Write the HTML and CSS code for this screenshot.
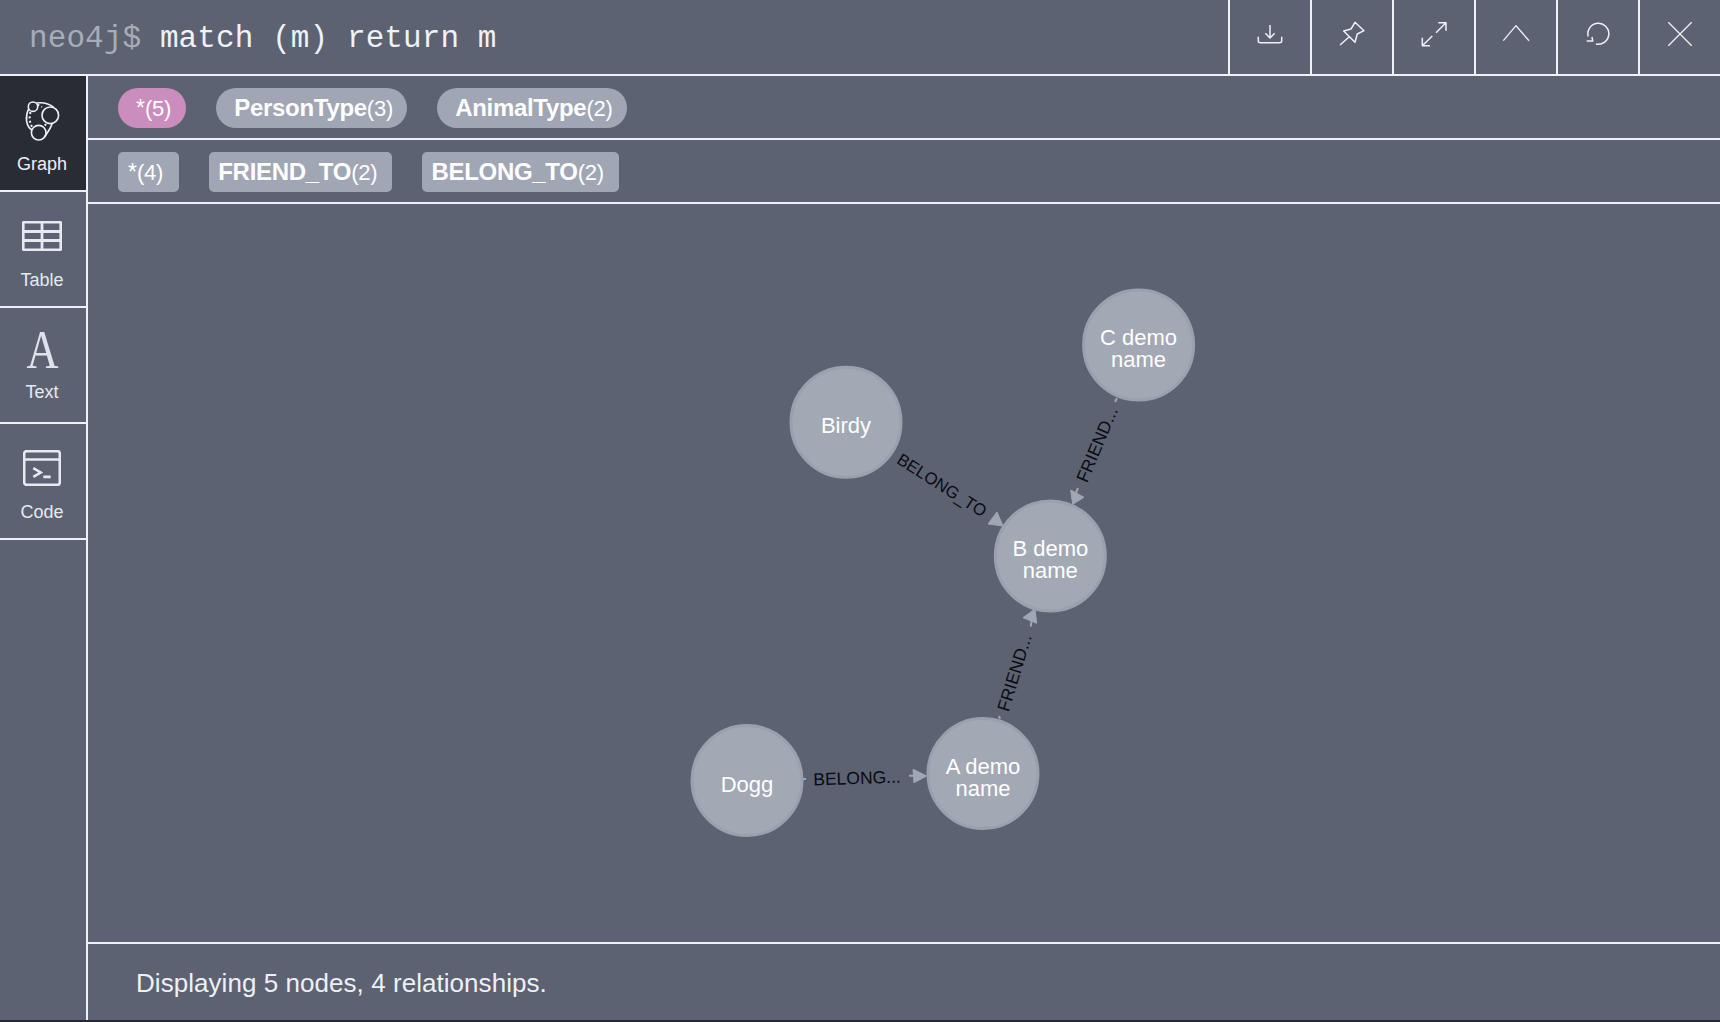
FILE: index.html
```html
<!DOCTYPE html>
<html lang="en">
<head>
<meta charset="utf-8">
<title>neo4j result frame</title>
<link rel="stylesheet" href="styles.css">
</head>
<body>
<div class="frame">
  <header class="head">
    <div class="query"><span class="prompt">neo4j$</span> <span class="cmd">match (m) return m</span></div>
    <div class="actions">
      <button class="act"><svg class="ic" viewBox="0 0 32 32"><path d="M15 7V20M10.3 15.3L15 20L19.7 15.3M3.3 18.7V22.7A2 2 0 0 0 5.3 24.7H24.7A2 2 0 0 0 26.7 22.7V18.7"/></svg></button>
      <button class="act"><svg class="ic" viewBox="0 0 32 32"><path d="M18 4.3L27 12.7L20.3 16L18 24.3L6.7 13L14 11ZM12.3 18.7L3 27"/></svg></button>
      <button class="act"><svg class="ic" viewBox="0 0 32 32"><path d="M17 14.7L27 4.7M19.3 4.7H27V12.7M13.3 18L3.3 27.7M3.3 19.7V27.7H11"/></svg></button>
      <button class="act"><svg class="ic thin" viewBox="0 0 32 32"><path d="M2.3 22.7L15 7.7L28 22.7"/></svg></button>
      <button class="act"><svg class="ic" viewBox="0 0 32 32"><path d="M13 26A10.5 10.5 0 1 0 5.2 18.5M3.7 23H9.7L9 19"/></svg></button>
      <button class="act"><svg class="ic thin" viewBox="0 0 32 32"><path d="M3.3 4.3L26.7 27.7M26.7 4.3L3.3 27.7"/></svg></button>
    </div>
  </header>
  <div class="main">
    <nav class="side">
      <div class="tab on">
        <div class="slot"><svg class="gicon" viewBox="0 0 52 56"><circle cx="17" cy="14.7" r="4.7"/><circle cx="34.3" cy="23.3" r="8.3"/><circle cx="22.7" cy="40.7" r="7.3"/><path d="M12.8 16.5C9 24 9.500 34 16 38M20.500 11C27 10 33 11.500 38 15.500M36 31.700C35 36 32 39.500 28.500 45"/><path class="dots" d="M14.500 20C13 26 13.500 31 16.500 35.500M21.500 12.500L26 15M30 32L27.500 35.500"/></svg></div>
        <span class="lbl">Graph</span>
      </div>
      <div class="tab">
        <div class="slot"><svg class="ticon" viewBox="0 0 40 30"><path d="M2.200 1.200H37.800A1 1 0 0 1 38.800 2.200V27.800A1 1 0 0 1 37.800 28.800H2.200A1 1 0 0 1 1.200 27.800V2.200A1 1 0 0 1 2.200 1.200ZM1.200 10.500H38.800M1.200 19.500H38.800M20 1.200V28.800"/></svg></div>
        <span class="lbl">Table</span>
      </div>
      <div class="tab tab-text">
        <div class="slot"><span class="bigA">A</span></div>
        <span class="lbl">Text</span>
      </div>
      <div class="tab">
        <div class="slot"><svg class="cicon" viewBox="0 0 38 36"><rect x="1.200" y="1.200" width="35.600" height="33.600" rx="2.500"/><path d="M1.200 9.500H36.800M10.300 18.200L17.700 22.500L10.300 26.900M20.300 26.900H27.700"/></svg></div>
        <span class="lbl">Code</span>
      </div>
    </nav>
    <section class="content">
      <div class="row">
        <span class="pill node sel">*<i>(5)</i></span>
        <span class="pill node"><b>PersonType</b><i>(3)</i></span>
        <span class="pill node"><b>AnimalType</b><i>(2)</i></span>
      </div>
      <div class="row">
        <span class="pill rel all">*<i>(4)</i></span>
        <span class="pill rel"><b>FRIEND_TO</b><i>(2)</i></span>
        <span class="pill rel"><b>BELONG_TO</b><i>(2)</i></span>
      </div>
      <svg class="graph" viewBox="88 204 1632 738">
        <g class="arrows">
          <path d="M1003 526L988 524L997 512Z"/>
          <path d="M1072.700 504.300L1070.700 490L1084 497.300Z"/>
          <path d="M1035 609L1023 617.700L1036.700 623.300Z"/>
          <path d="M926.700 776L913 769.300L914 782.700Z"/>
        </g>
        <g class="stubs">
          <path d="M1078 488L1075.500 494"/>
          <path d="M1030.700 626.700L1032 618"/>
          <path d="M909 775.700L916 775.700"/>
          <path d="M803 779L806 779"/>
          <path d="M1117 398L1115 402"/>
          <path d="M1000 719L999 716"/>
        </g>
        <g class="edge">
          <text class="tight" transform="translate(942 485) rotate(32.500)" dy="6">BELONG_TO</text>
          <text transform="translate(1097 444.500) rotate(-67)" dy="6">FRIEND...</text>
          <text transform="translate(1014.500 672.700) rotate(-73)" dy="6">FRIEND...</text>
          <text transform="translate(857 778) rotate(-2)" dy="6">BELONG...</text>
        </g>
        <g class="nodes">
          <circle cx="846" cy="422.300" r="55"/>
          <circle cx="1138.600" cy="345" r="55"/>
          <circle cx="1050.300" cy="556" r="55"/>
          <circle cx="983" cy="773.600" r="55"/>
          <circle cx="747" cy="780.500" r="55"/>
        </g>
        <g class="caps">
          <text x="846" y="433">Birdy</text>
          <text x="1138.600" y="345">C demo</text>
          <text x="1138.600" y="367">name</text>
          <text x="1050.300" y="556">B demo</text>
          <text x="1050.300" y="578">name</text>
          <text x="983" y="774">A demo</text>
          <text x="983" y="796">name</text>
          <text x="747" y="792">Dogg</text>
        </g>
      </svg>
      <footer class="foot">Displaying 5 nodes, 4 relationships.</footer>
    </section>
  </div>
</div>
</body>
</html>
```

FILE: styles.css
```css
* { box-sizing: border-box; }
html, body { margin: 0; height: 100%; background: #262932; overflow: hidden; }
body { font-family: "Liberation Sans", Arial, sans-serif; }
.frame { width: 1720px; height: 1020px; background: #5c6272; display: flex; flex-direction: column; color: #eef0f5; }
.head { height: 76px; border-bottom: 2px solid #eef1f6; display: flex; justify-content: space-between; flex: none; }
.query { font-family: "Liberation Mono", monospace; font-size: 31px; letter-spacing: 0.1px; line-height: 78px; padding-left: 29px; white-space: pre; }
.prompt { color: #a7acb9; }
.cmd { color: #f0f2f6; }
.actions { display: flex; }
.act { width: 82px; height: 74px; border: 0; border-left: 2px solid #eef1f6; background: none; padding: 18px 0 0 2px; margin: 0; display: flex; justify-content: center; align-items: flex-start; }
.ic { width: 32px; height: 32px; fill: none; stroke: #eef1f6; stroke-width: 1.5; stroke-linejoin: round; }
.ic.thin { stroke-width: 1.3; }
.main { flex: 1; display: flex; min-height: 0; }
.side { width: 88px; flex: none; border-right: 2px solid #eef1f6; }
.tab { height: 116px; padding-right: 2px; border-bottom: 2px solid #eef1f6; display: flex; flex-direction: column; align-items: center; color: #e6e9f0; }
.tab.on { background: #292c35; color: #eef0f5; }
.slot { height: 77px; padding-top: 11px; display: flex; align-items: center; justify-content: center; flex: none; }
.lbl { font-size: 18px; line-height: 22px; }
.tab-text .slot { padding-top: 7px; }
.tab-text .lbl { margin-top: -4px; }
.gicon { width: 52px; height: 56px; fill: none; stroke: #eef1f6; stroke-width: 1.6; }
.dots { stroke-dasharray: 2 2.400; stroke-width: 2; }
.ticon { width: 40px; height: 30px; fill: none; stroke: #e6e9f0; stroke-width: 2.800; }
.cicon { width: 38px; height: 36px; fill: none; stroke: #e6e9f0; stroke-width: 2.600; }
.bigA { font-family: "Liberation Serif", serif; font-size: 54px; line-height: 54px; color: #dfe2ea; transform: scaleX(0.82); display: block; }
.content { flex: 1; min-width: 0; display: flex; flex-direction: column; }
.row { height: 64px; flex: none; border-bottom: 2px solid #eef1f6; padding: 12px 0 0 30px; display: flex; gap: 30px; align-items: flex-start; }
.pill { height: 40px; background: #a1a6b4; color: #fff; font-size: 23px; line-height: 40px; display: block; white-space: nowrap; }
.pill b { font-weight: 700; font-size: 24px; letter-spacing: -0.3px; }
.pill i { font-style: normal; font-weight: 400; font-size: 22px; letter-spacing: -0.2px; }
.node { border-radius: 20px; padding: 0 14px 0 18px; }
.node.sel { background: #cb8dbd; padding-right: 15px; }
.rel { border-radius: 5px; padding: 0 15px 0 9px; }
.rel.all { padding: 0 16px 0 10px; }
.graph { flex: 1; min-height: 0; width: 100%; display: block; }
.nodes circle { fill: #a3a8b5; stroke: #9aa0ae; stroke-width: 3; }
.arrows path { fill: #a1a6b4; stroke: #a1a6b4; stroke-width: 1; }
.stubs path { stroke: #a1a6b4; stroke-width: 2; fill: none; }
.edge text { font-size: 17.500px; fill: #0a0b10; text-anchor: middle; }
.edge .tight { font-size: 16.800px; }
.caps text { font-size: 22px; fill: #fff; text-anchor: middle; }
.foot { height: 78px; flex: none; border-top: 2px solid #eef1f6; padding-left: 48px; font-size: 26px; letter-spacing: 0.05px; line-height: 78px; color: #eef0f5; }
```
